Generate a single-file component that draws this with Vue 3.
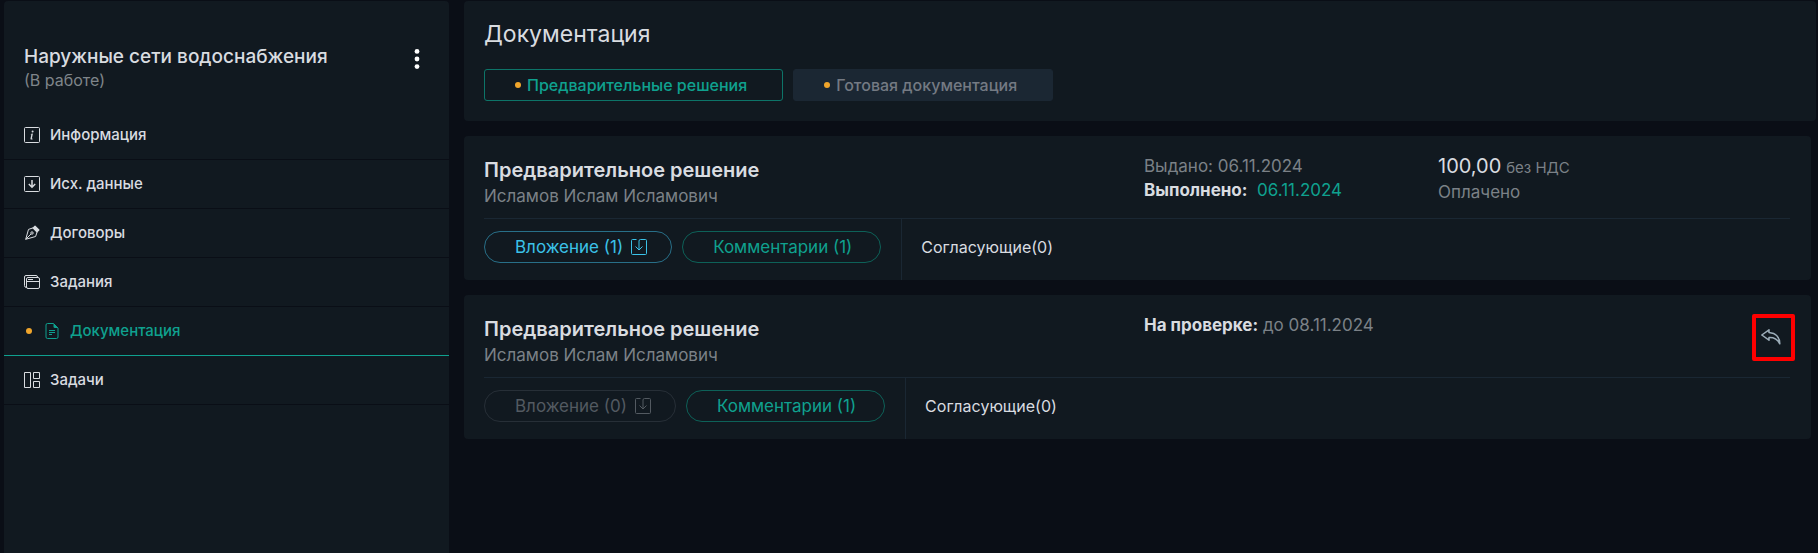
<script setup>
const menu = [
  { icon: 'info', label: 'Информация' },
  { icon: 'download', label: 'Исх. данные' },
  { icon: 'pen', label: 'Договоры' },
  { icon: 'windows', label: 'Задания' },
  { icon: 'file', label: 'Документация', active: true, dot: true },
  { icon: 'board', label: 'Задачи' },
]

const tabs = [
  { label: 'Предварительные решения', active: true },
  { label: 'Готовая документация', active: false },
]

const cards = [
  {
    id: 1,
    title: 'Предварительное решение',
    author: 'Исламов Ислам Исламович',
    issued: '06.11.2024',
    done: '06.11.2024',
    price: '100,00',
    status: 'Оплачено',
    files: 1,
    comments: 1,
    approvers: 0,
  },
  {
    id: 2,
    title: 'Предварительное решение',
    author: 'Исламов Ислам Исламович',
    review: 'до 08.11.2024',
    files: 0,
    comments: 1,
    approvers: 0,
  },
]
</script>

<template>
  <div class="layout">
    <aside class="sidebar">
      <header class="project">
        <div>
          <h2 class="project-name">Наружные сети водоснабжения</h2>
          <p class="project-state">(В работе)</p>
        </div>
        <button class="more" type="button" aria-label="Меню">
          <svg width="6" height="22" viewBox="0 0 6 22" fill="#fff">
            <circle cx="3" cy="3.4" r="2.4" /><circle cx="3" cy="11" r="2.4" /><circle cx="3" cy="18.6" r="2.4" />
          </svg>
        </button>
      </header>
      <nav>
        <a v-for="item in menu" :key="item.label" href="#" class="item" :class="{ active: item.active }">
          <span v-if="item.dot" class="dot"></span>
          <svg v-if="item.icon === 'info'" class="icon" viewBox="0 0 16 16">
            <rect x=".5" y=".5" width="15" height="15" rx="1" />
            <path class="solid" d="M8.93 6.588l-2.29.287-.082.38.45.083c.294.07.352.176.288.469l-.738 3.468c-.194.897.105 1.319.808 1.319.545 0 1.178-.252 1.465-.598l.088-.416c-.2.176-.492.246-.686.246-.275 0-.375-.193-.304-.533z" />
            <circle class="solid" cx="8.6" cy="4.5" r="1" />
          </svg>
          <svg v-else-if="item.icon === 'download'" class="icon" viewBox="0 0 16 16">
            <rect x=".5" y=".5" width="15" height="15" rx="1" />
            <path class="bold" d="M8 4v7M4.800 8L8 11.200 11.200 8" />
          </svg>
          <svg v-else-if="item.icon === 'pen'" class="icon" viewBox="0 0 16 16">
            <path class="solid" d="M10.600.7a.6.6 0 0 1 .85 0l3.850 3.850a.6.6 0 0 1 0 .85l-2.400 2.300-4.600-4.600z" />
            <path d="M9.200 2.800L4.500 4.400 1.700 14.300l9.900-2.800 1.600-4.700M1.700 14.300L7 9" />
            <circle cx="8" cy="8" r="1.200" />
          </svg>
          <svg v-else-if="item.icon === 'windows'" class="icon" viewBox="0 0 16 16">
            <rect x="2.500" y="3.500" width="13" height="11" rx="1.500" />
            <path d="M2.500 7.500h13M4 5.500h5M2.500 13.500A2 2 0 0 1 .5 11.500V3A1.500 1.500 0 0 1 2 1.500h10A1.500 1.500 0 0 1 13.500 3v.5" />
          </svg>
          <svg v-else-if="item.icon === 'file'" class="icon" viewBox="0 0 16 16">
            <path d="M9.500.5H3.500A1.500 1.500 0 0 0 2 2v12a1.500 1.500 0 0 0 1.500 1.500h9A1.500 1.500 0 0 0 14 14V5zM5 7.500h6M5 9.500h6M5 11.500h3" />
            <path class="solid" d="M9.500.5v3A1.500 1.500 0 0 0 11 5h3z" />
          </svg>
          <svg v-else class="icon" viewBox="0 0 16 16">
            <path d="M.5.5h6v15h-6zM9.500.5h6v6h-6zM9.500 9.500h6v6h-6z" />
          </svg>
          <span>{{ item.label }}</span>
        </a>
      </nav>
    </aside>

    <main class="main">
      <section class="panel head">
        <h1 class="head-title">Документация</h1>
        <div class="tabs">
          <button v-for="tab in tabs" :key="tab.label" type="button" class="tab" :class="{ active: tab.active }">
            <span class="dot"></span>{{ tab.label }}
          </button>
        </div>
      </section>

      <article v-for="card in cards" :key="card.id" class="panel card">
        <div class="summary">
          <div class="who">
            <h3 class="card-title">{{ card.title }}</h3>
            <p class="muted">{{ card.author }}</p>
          </div>
          <div class="dates">
            <p v-if="card.issued" class="muted">Выдано: {{ card.issued }}</p>
            <p v-if="card.done"><strong>Выполнено:</strong>&nbsp; <span class="teal">{{ card.done }}</span></p>
            <p v-if="card.review"><strong>На проверке:</strong> <span class="muted">{{ card.review }}</span></p>
          </div>
          <div v-if="card.price" class="dates">
            <p><span class="price">{{ card.price }}</span> <small class="muted">без НДС</small></p>
            <p class="muted">{{ card.status }}</p>
          </div>
          <button v-if="card.review" class="undo" type="button" aria-label="Вернуть">
            <svg width="20" height="16" viewBox="0 0 20 16">
              <path d="M8 .8L.8 6 8 11.200V8.500c5-.3 8.300 1.300 10.800 6.300C18.800 8.500 15 4 8 3.500z" />
            </svg>
          </button>
        </div>
        <div class="actions">
          <div class="buttons">
            <button type="button" class="pill files" :disabled="card.files === 0">
              Вложение ({{ card.files }})
              <svg width="16" height="16" viewBox="0 0 16 16">
                <path d="M5.500 .5H1.500A1 1 0 0 0 .5 1.500v13a1 1 0 0 0 1 1h13a1 1 0 0 0 1-1v-13A1 1 0 0 0 14.500.5H9.500a1.500 1.500 0 0 0-1.500 1.500v9M4.500 7.500L8 11l3.500-3.500" />
              </svg>
            </button>
            <button type="button" class="pill comments">Комментарии ({{ card.comments }})</button>
          </div>
          <div class="approvers">Согласующие({{ card.approvers }})</div>
        </div>
      </article>
    </main>
  </div>
</template>

<style>
body {
  background: #0a0e16;
}
</style>

<style scoped>
.layout {
  display: flex;
  gap: 15px;
  min-height: 100vh;
  box-sizing: border-box;
  padding: 1px 0 0 4px;
  font-family: Inter, "Noto Sans", sans-serif;
  font-size: 16px;
  line-height: 24px;
  color: #d9dce0;
}
h1, h2, h3, p {
  margin: 0;
  font-weight: 400;
}
button {
  font: inherit;
  cursor: pointer;
}
.sidebar {
  flex: 0 0 445px;
  background: #111920;
  border-radius: 4px 4px 0 0;
}
.project {
  display: flex;
  justify-content: space-between;
  padding: 44px 28px 20px 20px;
}
.project-name {
  font-size: 19px;
  font-weight: 500;
}
.project-state {
  line-height: 22px;
  color: #7f858a;
}
.more {
  display: flex;
  align-self: flex-start;
  padding: 3px 1px;
  border: 0;
  background: none;
}
.item {
  display: flex;
  align-items: center;
  gap: 10px;
  height: 48px;
  padding: 0 20px;
  border-bottom: 1px solid #0a0e16;
  color: inherit;
  font-size: 15px;
  font-weight: 500;
  text-decoration: none;
}
.item.active {
  color: #0fa18f;
  border-bottom-color: #0fa18f;
}
.item .dot {
  margin: 0 2px;
}
.icon {
  width: 16px;
  height: 16px;
  fill: none;
  stroke: currentColor;
}
.bold {
  stroke-width: 1.5;
}
.solid {
  fill: currentColor;
  stroke: none;
}
.dot {
  flex: none;
  width: 6px;
  height: 6px;
  border-radius: 50%;
  background: #f0a52b;
}
.main {
  flex: 1;
  display: flex;
  flex-direction: column;
  gap: 15px;
  min-width: 0;
}
.panel {
  background: #111920;
  border-radius: 4px;
}
.head {
  margin-right: 2px;
  padding: 16px 20px 20px;
}
.head-title {
  font-size: 23px;
  line-height: 34px;
}
.tabs {
  display: flex;
  gap: 10px;
  margin-top: 18px;
}
.tab {
  display: flex;
  align-items: center;
  gap: 6px;
  height: 32px;
  padding: 0 35px 0 30px;
  border: 1px solid #1b2733;
  border-radius: 3px;
  background: #1b2733;
  color: #747a83;
  font-weight: 500;
}
.tab.active {
  border-color: #0d7468;
  background: none;
  color: #0fa18f;
}
.card {
  margin-right: 7px;
  padding: 0 21px 0 20px;
}
.summary {
  position: relative;
  display: grid;
  grid-template-columns: 660fr 294fr 352fr;
  height: 82px;
  border-bottom: 1px solid #1a2733;
  font-size: 17px;
}
.who {
  padding-top: 22px;
}
.card-title {
  font-size: 20px;
  font-weight: 600;
}
.who .muted {
  line-height: 28px;
}
.dates {
  padding-top: 18px;
}
.muted {
  color: #7b8187;
}
.teal {
  color: #0fa18f;
}
strong {
  font-weight: 700;
}
.price {
  font-size: 20px;
}
small {
  font-size: 15px;
}
.undo {
  position: absolute;
  top: 19px;
  right: -5px;
  display: flex;
  align-items: center;
  width: 43px;
  height: 47px;
  padding: 0 0 2px 5px;
  border: 4px solid #f00;
  border-radius: 2px;
  background: none;
}
.undo path {
  fill: none;
  stroke: #9cadb9;
  stroke-width: 1.5;
  stroke-linejoin: round;
}
.actions {
  display: flex;
  height: 61px;
}
.buttons {
  display: flex;
  gap: 10px;
  padding: 12px 20px 0 0;
  border-right: 1px solid #1a2733;
}
.pill {
  display: flex;
  align-items: center;
  gap: 8px;
  height: 32px;
  padding: 0 28px 0 30px;
  border: 1px solid;
  border-radius: 16px;
  background: none;
  font-size: 17px;
}
.files {
  padding-right: 24px;
  border-color: #286f88;
  color: #3bc2e8;
}
.files svg {
  fill: none;
  stroke: currentColor;
}
.files:disabled {
  border-color: #272f37;
  color: #535a61;
  cursor: default;
}
.comments {
  border-color: #0d6158;
  color: #0fa18f;
}
.approvers {
  padding: 16px 0 0 19px;
}
</style>
